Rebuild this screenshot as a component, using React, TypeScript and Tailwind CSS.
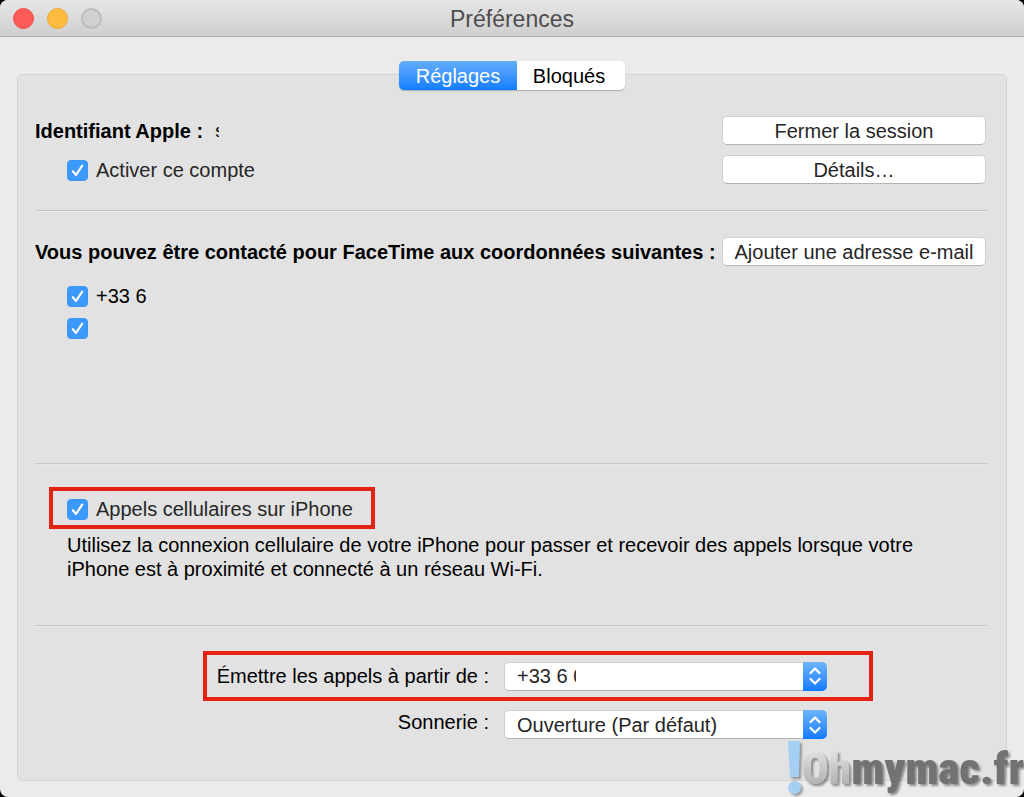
import { useState } from 'react';
import type { ReactNode } from 'react';
import { clsx } from 'clsx';

const tabs = [
  { id: 'settings', label: 'Réglages' },
  { id: 'blocked', label: 'Bloqués' },
];

function TitleBar() {
  return (
    <header className="relative flex h-[37px] items-center justify-center border-b border-[#acacac] bg-linear-to-b from-[#e6e6e6] to-[#cfcfcf]">
      <div className="absolute left-[13px] flex gap-[13px]">
        <button type="button" aria-label="Fermer" className="size-[21px] rounded-full border border-[#f04c48] bg-[#fc5b57]" />
        <button type="button" aria-label="Réduire" className="size-[21px] rounded-full border border-[#eda72b] bg-[#fdbc40]" />
        <button type="button" aria-label="Agrandir" disabled className="size-[21px] rounded-full border-2 border-[#bcbcbc] bg-[#d0d0d0]" />
      </div>
      <h1 className="pt-0.5 text-[23px] leading-7 text-[#4d4d4d]">Préférences</h1>
    </header>
  );
}

function PushButton({ children }: { children: ReactNode }) {
  return (
    <button
      type="button"
      className="h-[29px] w-[264px] shrink-0 rounded-[5px] border border-[#cfcfcf] border-b-[#b4b4b4] bg-white whitespace-nowrap text-[#262626]"
    >
      {children}
    </button>
  );
}

function Checkbox({ label, name, className }: { label?: string; name: string; className?: string }) {
  return (
    <label className={clsx('flex items-center gap-2', className)}>
      <span className="relative size-[21px] shrink-0">
        <input type="checkbox" defaultChecked aria-label={name} className="peer block size-[21px] appearance-none rounded-[4px] border border-[#c0c0c0] bg-white checked:border-[#3b96f6] checked:bg-[#3b99fc]" />
        <svg viewBox="0 0 21 21" className="pointer-events-none absolute inset-0 hidden peer-checked:block" fill="none" stroke="#fff" strokeWidth="2.2" strokeLinecap="round" strokeLinejoin="round">
          <path d="M5.8 11.3 9 15 15.2 5.6" />
        </svg>
      </span>
      {label}
    </label>
  );
}

function PopUp({ id, value, className }: { id: string; value: string; className: string }) {
  return (
    <div className="relative h-[29px] w-[323px] shrink-0">
      <select
        id={id}
        className={clsx('h-[29px] w-full appearance-none rounded-[5px] border border-[#cfcfcf] border-b-[#b4b4b4] bg-white pl-3 text-[#262626]', className)}
      >
        <option>{value}</option>
      </select>
      <span className="pointer-events-none absolute inset-y-0 right-0 flex w-6 items-center justify-center rounded-r-[5px] bg-linear-to-b from-[#6cb3fa] to-[#0b7aff]">
        <svg viewBox="0 0 12 18" className="h-[18px] w-3" fill="none" stroke="#fff" strokeWidth="2.2" strokeLinecap="round" strokeLinejoin="round">
          <path d="M1.500 6 6 1.500l4.500 4.500M1.500 12 6 16.500l4.500-4.500" />
        </svg>
      </span>
    </div>
  );
}

function Divider() {
  return <hr className="-mr-px h-0.5 border-t border-b border-t-[#c6c6c6] border-b-[#e8e8e8]" />;
}

function Watermark() {
  return (
    <div className="pointer-events-none absolute right-0 bottom-0 flex items-end font-['Roboto_Condensed','Liberation_Sans',sans-serif] text-[45px] leading-[56px] font-black">
      <svg viewBox="0 0 14 56" className="h-14 w-3.5 drop-shadow-[2px_2px_1px_rgba(0,0,0,0.35)]" fill="#a5d0f3">
        <path d="M0 0h12l-1 36H2z" />
        <circle cx="6.500" cy="46.500" r="6.500" />
      </svg>
      <span className="bg-linear-to-b from-[#f0f0f0] to-[#a0a0a0] bg-clip-text text-transparent drop-shadow-[2px_2px_1px_rgba(0,0,0,0.4)]">Oh</span>
      <span className="text-[#727272] drop-shadow-[2px_2px_1px_rgba(0,0,0,0.4)]">mymac.fr</span>
    </div>
  );
}

export default function App() {
  const [active, setActive] = useState('settings');

  return (
    <div className="bg-black">
      <main className="relative flex min-h-screen flex-col overflow-hidden rounded-[8px] bg-[#ebebeb] font-['Liberation_Sans',Arial,sans-serif] text-[20px] leading-6 text-black">
        <TitleBar />

        <nav className="relative z-10 mt-6 flex self-center rounded-[5px] shadow-[0_1px_1px_rgba(0,0,0,0.25)]">
          {tabs.map(({ id, label }) => (
            <button
              key={id}
              type="button"
              onClick={() => setActive(id)}
              className={clsx(
                'h-[29px] first:w-[118px] first:rounded-l-[5px] last:w-[108px] last:rounded-r-[5px] last:pr-1',
                active === id ? 'bg-linear-to-b from-[#62aefa] to-[#0f7dff] text-white' : 'bg-white text-black',
              )}
            >
              {label}
            </button>
          ))}
        </nav>

        <div className="mx-[17px] mt-[-16px] mb-4 flex-1 rounded-[6px] border border-[#d4d4d4] bg-[#e2e2e2] pr-5 pl-[17px]">
          <section className="flex justify-between pt-[41px] pb-[26px]">
            <div className="flex flex-col gap-[15px] pt-[3px]">
              <p className="flex gap-3 font-bold">
                Identifiant Apple :
                <span className="w-1 overflow-hidden text-[18px] font-normal">s</span>
              </p>
              <Checkbox name="Activer ce compte" label="Activer ce compte" className="ml-8 text-[#262626]" />
            </div>
            <div className="flex flex-col gap-[10px]">
              <PushButton>Fermer la session</PushButton>
              <PushButton>Détails…</PushButton>
            </div>
          </section>

          <Divider />

          <section className="min-h-[251px] pt-[25px]">
            <div className="flex items-center justify-between">
              <h2 className="font-bold whitespace-nowrap">Vous pouvez être contacté pour FaceTime aux coordonnées suivantes :</h2>
              <PushButton>Ajouter une adresse e-mail</PushButton>
            </div>
            <div className="mt-[18px] ml-8 flex flex-col gap-2">
              <Checkbox name="Numéro de téléphone" label="+33 6" />
              <Checkbox name="Adresse e-mail" className="h-6" />
            </div>
          </section>

          <Divider />

          <section className="pt-[22px] pb-11">
            <div className="ml-[14px] flex h-[42px] w-[326px] items-center border-4 border-[#e42313] pt-0.5 pl-[14px]">
              <Checkbox name="Appels cellulaires sur iPhone" label="Appels cellulaires sur iPhone" className="text-[#262626]" />
            </div>
            <p className="mt-1 ml-8 max-w-[870px]">
              Utilisez la connexion cellulaire de votre iPhone pour passer et recevoir des appels lorsque votre iPhone est à proximité et connecté à un réseau Wi-Fi.
            </p>
          </section>

          <Divider />

          <section className="ml-[168px] w-[670px] pt-6 pb-[41px]">
            <div className="flex h-[50px] items-center gap-[15px] border-4 border-[#e42313]">
              <label htmlFor="caller" className="w-[282px] text-right">Émettre les appels à partir de :</label>
              <PopUp id="caller" value="+33 6 0" className="pr-[250px]" />
            </div>
            <div className="mt-[9px] flex items-start gap-[15px] pl-1">
              <label htmlFor="ringtone" className="w-[282px] text-right">Sonnerie :</label>
              <PopUp id="ringtone" value="Ouverture (Par défaut)" className="pr-8" />
            </div>
          </section>
        </div>

        <Watermark />
      </main>
    </div>
  );
}
